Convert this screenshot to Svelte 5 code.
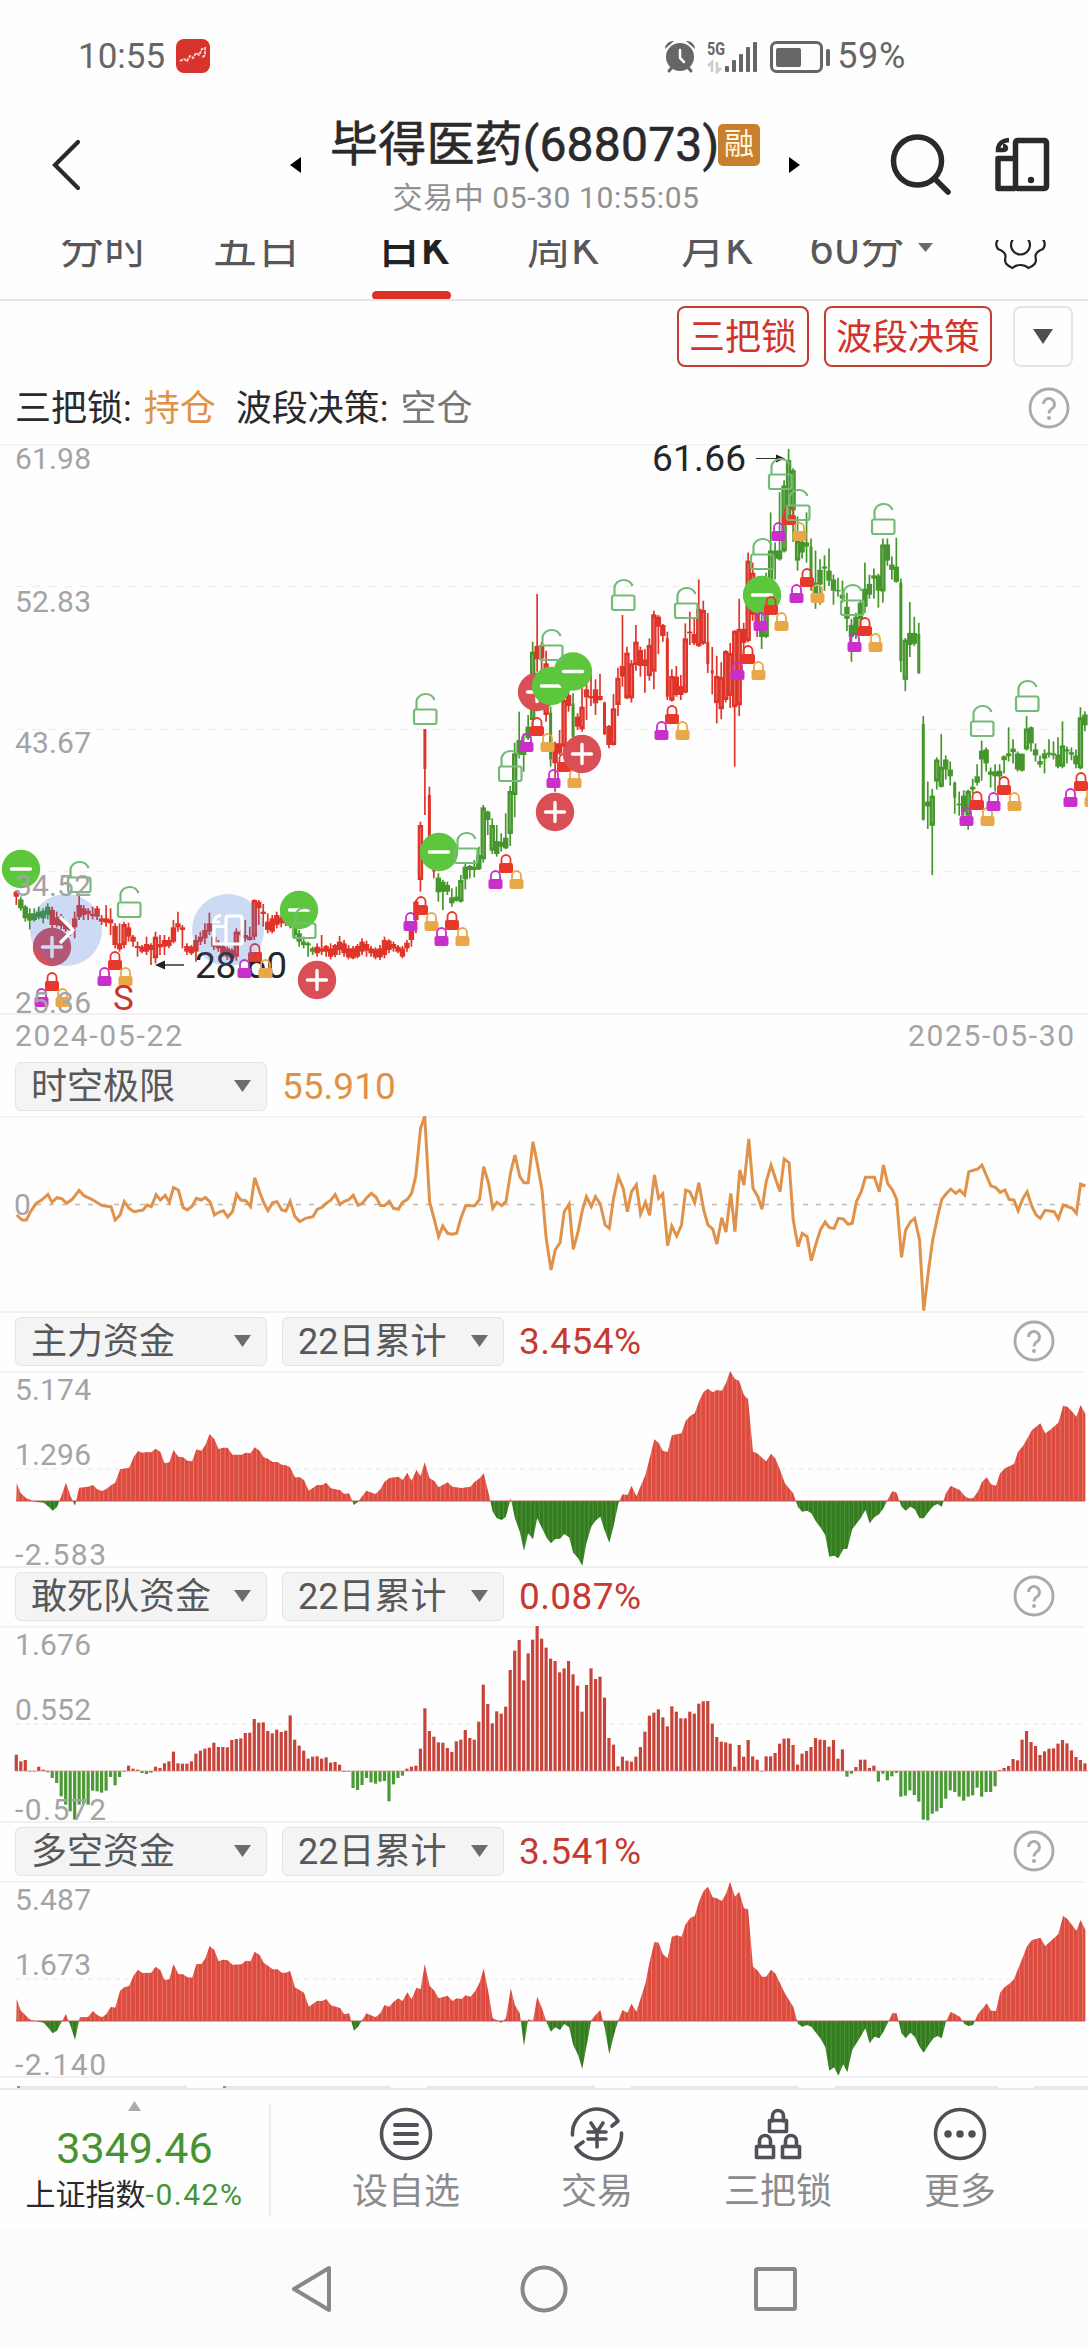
<script lang="ts">
	type Row = [number, number, number, number];
	type Section = { top: number; unit: number; rows: string };

	const START = 16.3;
	const STEP = 4.49;
	const CHART_TOP = 444;

	// high, body top, body bottom, low
	const sections: Section[] = [
		{
			top: 840,
			unit: 3,
			rows: `150,155,170,195 170,178,205,212 195,200,235,245 205,220,242,268 205,220,240,245 200,215,232,238
			205,212,235,250 190,200,225,238 200,210,255,265 215,232,255,262 222,230,258,268 245,252,268,275
			258,262,270,288 215,235,262,295 165,195,232,240 195,205,225,240 205,212,222,240 200,222,228,238
			198,205,230,240 225,235,245,255 195,235,248,260 205,238,250,285 250,258,315,325 250,310,328,335
			245,252,315,325 248,262,290,305 285,290,305,320 305,318,324,350 315,320,335,340 290,312,335,345
			310,315,330,375 275,290,355,370 285,312,322,345 285,300,320,345 290,300,318,325 240,262,305,310
			215,250,262,275 255,262,270,325 310,318,335,345 315,320,340,345 285,300,335,365 275,290,305,315
			250,270,295,312 218,250,275,285 255,290,320,330 300,310,325,335 310,318,340,350 320,325,350,360
			325,330,355,362 265,275,350,362 270,275,285,290 240,285,295,305 260,290,300,302 178,180,290,300
			180,185,205,255 192,215,222,260 220,245,270,280 225,235,275,280 215,225,255,265 225,232,250,262
			238,240,250,258 242,245,258,265 255,260,285,295 270,280,305,320 290,305,315,325 305,310,316,350
			320,325,335,345 310,320,340,350 285,325,335,345 315,318,335,350 310,325,350,358 312,315,345,352
			288,305,330,345 300,310,340,350 315,325,352,358 318,325,355,358 312,318,350,355 295,305,335,345
			302,312,332,350 318,325,340,350 322,328,352,358 315,325,352,360 290,300,345,355 298,302,330,340
			305,312,325,335 315,320,335,340 318,325,350,355 300,308,325,335`
		},
		{
			top: 580,
			unit: 3,
			rows: `1040,1050,1080,1100 960,965,1020,1060 725,735,900,935 447,447,567,705 620,645,810,860 850,860,875,895
			880,893,937,965 900,905,935,990 905,915,935,945 925,952,970,980 920,950,962,965 885,900,965,968
			850,860,898,928 855,858,870,895 840,860,870,892 800,825,868,870 675,682,838,848 692,695,720,765
			715,735,812,822 735,783,822,830 760,785,800,815 700,773,805,808 618,633,762,798 488,520,645,712
			395,480,525,535 460,515,525,575 405,440,475,480 185,215,420,450 42,198,238,275 185,195,235,270
			212,250,405,425 380,398,538,560 485,490,550,635 450,490,520,525 340,360,500,520 330,345,378,395
			340,370,470,475 400,410,440,450 325,380,448,455 300,328,352,420 285,348,355,378 298,328,370,405
			282,348,360,362 365,368,462,465 435,438,495,505 342,385,495,497 263,293,375,408 105,258,290,320
			200,218,355,358 240,250,355,368 135,185,255,272 200,210,258,290 208,238,258,338 175,195,288,302
			92,103,275,328 105,110,140,222 132,135,168,185 155,175,350,360 268,288,362,365 258,290,345,350
			285,318,345,360 130,175,338,340 95,155,160,195 115,162,190,195`
		},
		{
			top: 430,
			unit: 2.489,
			rows: `372,445,538,540 425,448,532,535 455,528,582,605 540,598,606,658 562,612,680,730 578,615,695,720
			548,550,672,678 530,555,662,692 498,500,690,838 420,495,685,712 480,495,530,580 305,325,525,528
			330,355,460,475 440,450,480,515 440,490,515,545 355,380,515,518 205,300,390,400 280,300,320,372
			155,300,322,325 125,138,302,305 47,75,220,235 95,100,200,278 215,275,325,350 270,278,305,320
			205,280,290,330 270,290,370,400 300,380,420,445 322,348,385,435 312,340,345,400 295,350,375,388
			360,372,400,435 368,398,401,415 375,410,420,430 405,440,470,500 470,485,515,577 455,465,510,520
			425,430,470,490 330,395,440,455 360,383,410,420 345,362,370,420 358,362,400,442 270,285,402,430
			270,285,325,338 315,335,348,372 268,340,378,380 370,380,575,603 518,522,622,650 428,505,535,565
			465,505,532,538 480,508,605,607 712,732,970,972 875,925,937,993 893,910,985,1108 815,820,875,895
			757,838,888,890 810,820,845,870 825,845,862,885 875,878,915,955 900,930,934,960 897,910,950,960
			895,898,960,995 868,888,895,905 832,862,878,885 773,798,820,873 790,795,830,850 840,850,858,890
			832,850,862,900 832,848,862,870 810,812,822,855 740,805,812,825 770,793,802,830 800,805,845,850
			805,806,848,850 712,743,795,798 738,740,780,800 780,795,810,825 810,824,833,840 795,805,818,855
			770,803,808,815 775,805,810,820 765,808,838,842 725,785,838,842 788,795,800,830 790,802,808,822
			795,810,832,842 690,715,842,845 700,708,735,750`
		}
	];

	const greenRanges = [
		[1, 7],
		[62, 66],
		[94, 115],
		[119, 119],
		[124, 124],
		[166, 238]
	];

	// bars narrower than their neighbours
	const narrow = [91, 92, 93, 119, 124, 131, 145, 154, 155, 177, 197, 201, 202, 209];

	const candles = sections
		.flatMap(({ top, unit, rows }) =>
			rows
				.trim()
				.split(/\s+/)
				.map((r) => r.split(',').map((v) => top - CHART_TOP + Number(v) / unit) as Row)
		)
		.map(([high, open, close, low], i) => ({
			x: START + STEP * i,
			high,
			open,
			close,
			low,
			w: narrow.includes(i) ? 3 : 5.4,
			color: greenRanges.some(([a, b]) => i >= a && i <= b) ? '#45962c' : '#de3429'
		}));

	const redBadges = [
		[52, 947],
		[317, 980],
		[537, 692],
		[555, 812]
	];
	const greenBadges = [
		[21, 869],
		[299, 910],
		[439, 852],
		[551, 686],
		[573, 671.5],
		[762, 595]
	];
	const openLocks = [
		[79, 859],
		[129, 884],
		[304, 905],
		[425, 691],
		[466, 830],
		[510, 748],
		[551, 627],
		[623, 577],
		[686, 585],
		[780, 456],
		[798, 487],
		[762, 536],
		[852, 582],
		[883, 501],
		[982, 703],
		[1027, 678]
	];
	const lockGroups = [
		[52, 972],
		[115, 951],
		[255, 943],
		[421, 896],
		[452, 911],
		[506, 854],
		[537, 717],
		[564, 753],
		[672, 705],
		[789, 506],
		[807, 568],
		[771, 596],
		[748, 645],
		[865, 617],
		[977, 791],
		[1004, 776],
		[1081, 772]
	];
	const prices = [
		['61.98', 469],
		['52.83', 612],
		['43.67', 753],
		['34.52', 896],
		['25.36', 1013]
	] as const;

	const limitLine =
		'24,525 32,540 38,540 44,515 52,490 60,480 69,463 75,487 82,473 89,476 96,490 104,478 114,451 121,467 134,480 147,497 160,500 166,540 173,525 179,485 186,505 193,515 206,510 212,495 218,500 225,464 231,480 238,466 244,487 250,443 257,450 264,503 270,510 277,498 283,475 290,480 296,472 303,487 309,525 316,516 322,512 328,531 335,515 341,463 347,480 354,482 361,500 367,413 374,455 380,488 386,512 393,488 399,485 406,510 412,513 418,484 425,530 432,545 440,535 451,530 457,508 464,502 470,490 477,480 483,464 490,494 496,484 502,480 509,466 516,496 522,490 529,472 535,460 542,472 548,496 554,497 561,484 567,505 574,508 580,487 587,478 593,460 599,410 606,265 612,228 619,485 626,540 632,590 638,558 645,580 652,583 658,580 664,535 671,497 684,497 691,478 697,380 704,430 710,505 716,487 723,497 729,485 736,395 742,345 749,410 755,428 761,428 768,305 775,380 781,450 787,595 794,690 800,630 807,608 813,515 820,492 826,628 833,575 839,512 845,470 852,500 858,470 865,492 872,555 878,565 884,475 891,410 898,445 904,515 910,455 917,434 923,522 930,487 936,526 943,405 949,475 955,462 962,617 968,558 975,588 982,555 988,450 994,455 1001,488 1007,428 1014,510 1020,555 1027,567 1033,612 1040,533 1046,576 1053,460 1059,575 1066,390 1072,435 1079,297 1085,445 1092,470 1098,508 1104,425 1111,375 1118,420 1124,455 1130,357 1137,368 1143,540 1150,620 1156,580 1163,590 1169,662 1176,610 1182,570 1189,546 1195,563 1202,565 1208,535 1215,537 1222,553 1228,550 1234,485 1241,455 1247,412 1260,412 1267,455 1273,375 1279,430 1286,450 1292,478 1299,652 1305,570 1312,545 1318,535 1325,600 1331,812 1338,690 1344,600 1351,530 1357,478 1364,460 1370,447 1377,460 1383,450 1390,465 1396,395 1409,387 1415,375 1421,405 1428,438 1435,443 1441,457 1448,450 1454,478 1461,480 1467,512 1474,475 1480,455 1487,500 1493,525 1499,535 1506,511 1519,515 1525,537 1532,495 1545,505 1551,520 1557,432 1564,438';

	const mainArea =
		'24,550 30,580 38,595 50,605 63,608 70,620 76,632 82,622 88,590 95,548 102,590 108,617 114,563 121,562 127,560 134,555 140,568 147,573 153,567 160,556 166,548 173,508 186,503 193,470 199,453 205,458 212,456 218,457 224,446 231,455 237,490 244,487 250,450 257,470 264,472 270,482 277,484 283,448 290,452 296,435 302,402 309,418 315,447 321,443 328,443 335,464 348,464 354,458 361,460 367,442 374,452 380,472 386,476 393,486 400,486 406,494 412,496 418,502 425,532 432,532 438,540 445,572 457,555 464,555 470,548 477,565 483,568 490,570 496,582 503,580 510,615 516,605 528,572 541,582 548,568 554,545 561,534 574,530 580,540 587,518 593,542 600,510 606,528 612,487 619,535 626,543 632,562 645,547 652,560 665,564 678,560 684,545 691,535 697,520 704,580 710,635 716,655 723,660 729,650 736,595 742,655 749,695 755,752 761,700 768,718 774,655 781,685 788,715 794,730 800,717 807,716 813,702 820,712 826,758 833,775 839,797 845,730 852,680 858,662 865,650 871,690 878,728 884,680 891,610 897,583 904,585 910,557 917,588 930,525 936,475 943,418 949,428 955,452 962,456 968,406 982,400 988,362 995,347 1001,340 1008,300 1014,275 1020,266 1027,277 1033,270 1040,272 1046,250 1052,213 1059,237 1065,242 1072,285 1078,298 1085,455 1091,460 1098,473 1104,484 1111,461 1117,475 1124,510 1131,550 1143,580 1150,622 1156,635 1163,632 1169,640 1176,665 1182,682 1189,705 1195,770 1202,767 1208,775 1215,748 1221,746 1228,688 1240,655 1247,630 1253,670 1260,652 1267,642 1273,625 1280,595 1286,573 1292,578 1299,620 1305,632 1312,620 1318,628 1325,655 1331,655 1338,635 1345,618 1351,612 1357,620 1363,580 1370,557 1377,565 1383,570 1390,588 1396,595 1402,595 1409,575 1415,545 1422,532 1428,553 1435,557 1441,520 1448,505 1461,492 1467,455 1474,438 1487,390 1499,370 1506,400 1513,390 1525,368 1532,317 1538,320 1545,335 1551,350 1557,315 1564,342';

	const bothArea =
		'24,537 30,572 44,600 63,608 70,625 76,640 82,632 88,608 95,582 102,620 108,660 115,592 127,591 134,573 140,585 147,592 153,583 160,560 166,563 173,512 179,502 186,498 193,465 199,449 205,459 218,458 224,440 231,450 237,480 244,478 250,432 257,462 264,463 270,472 277,473 283,432 290,432 296,415 302,378 309,390 315,424 321,419 328,421 335,434 348,433 354,422 361,424 367,395 374,405 380,428 393,448 400,448 406,458 412,458 418,452 425,502 438,518 445,560 457,542 464,543 470,537 477,556 490,564 496,583 503,580 510,632 516,620 528,580 541,592 548,580 554,555 561,560 567,545 574,535 580,543 587,517 593,538 600,503 606,508 612,432 619,497 626,512 632,535 645,527 652,543 658,535 665,537 671,526 678,530 684,515 691,488 697,445 704,520 710,595 716,600 722,608 729,595 736,505 742,555 749,580 755,678 761,598 768,603 774,530 781,565 788,610 794,635 800,622 807,630 813,612 820,622 826,675 833,705 839,747 845,680 852,600 858,585 865,570 871,620 878,702 884,650 891,600 897,570 904,578 910,551 917,575 930,490 936,425 943,366 949,368 955,402 962,415 968,350 975,346 982,350 988,312 995,293 1001,288 1008,240 1014,212 1020,200 1027,232 1033,235 1040,243 1046,222 1052,185 1059,230 1065,215 1072,265 1078,268 1085,440 1091,450 1098,470 1104,470 1111,449 1117,460 1124,490 1131,520 1143,560 1150,612 1156,620 1163,615 1169,620 1182,655 1189,680 1195,752 1202,742 1208,767 1215,733 1221,757 1228,690 1240,650 1247,625 1253,670 1260,650 1267,655 1273,635 1280,605 1286,579 1292,580 1299,640 1305,655 1312,638 1318,650 1325,680 1331,698 1338,675 1345,655 1351,648 1357,655 1363,605 1370,575 1383,590 1390,613 1396,618 1402,615 1409,583 1422,550 1428,572 1435,573 1441,518 1448,500 1454,492 1461,478 1474,410 1480,378 1487,360 1499,353 1506,378 1513,365 1525,342 1532,287 1538,297 1551,332 1557,300 1564,330';

	const teamBars = [
		585, 605, 601, 634, 635, 621, 630, 638, 655, 670, 710, 735, 755, 780, 735, 733, 735, 693, 695,
		699, 693, 652, 677, 652, 636, 618, 627, 630, 640, 643, 639, 621, 625, 611, 605, 576, 611, 612,
		612, 605, 582, 573, 567, 564, 549, 562, 562, 563, 541, 538, 536, 520, 519, 478, 489, 488, 514,
		521, 510, 517, 513, 467, 540, 558, 573, 597, 591, 590, 597, 593, 609, 607, 615, 637, 634, 685,
		691, 676, 655, 668, 672, 666, 664, 725, 674, 655, 648, 627, 621, 618, 567, 446, 514, 531, 548,
		549, 565, 577, 545, 540, 511, 535, 540, 486, 375, 433, 491, 455, 462, 441, 331, 273, 241, 362,
		281, 240, 198, 237, 264, 297, 304, 338, 326, 304, 344, 378, 456, 376, 326, 358, 351, 414, 535,
		555, 620, 591, 603, 606, 591, 562, 516, 468, 459, 449, 473, 500, 440, 456, 476, 476, 456, 462,
		432, 425, 424, 492, 532, 546, 548, 552, 621, 556, 591, 541, 590, 600, 634, 590, 590, 580, 552,
		537, 536, 556, 615, 582, 574, 562, 535, 540, 541, 561, 541, 597, 569, 651, 642, 622, 600, 600,
		625, 618, 666, 642, 662, 650, 640, 711, 708, 692, 706, 726, 780, 782, 762, 755, 745, 717, 692,
		697, 711, 723, 711, 707, 684, 711, 697, 697, 680, 631, 625, 619, 598, 602, 540, 514, 547, 559,
		586, 575, 567, 566, 552, 541, 551, 572, 592, 601, 611
	].map((v) => (v - 634) / 3);

	const funds = [
		{
			id: 'main',
			name: '主力资金',
			value: '3.454%',
			labels: ['5.174', '1.296', '-2.583'],
			zero: 130,
			points: scale(mainArea, 213, 130)
		},
		{
			id: 'team',
			name: '敢死队资金',
			value: '0.087%',
			labels: ['1.676', '0.552', '-0.572'],
			zero: 145,
			points: ''
		},
		{
			id: 'both',
			name: '多空资金',
			value: '3.541%',
			labels: ['5.487', '1.673', '-2.140'],
			zero: 140,
			points: scale(bothArea, 183, 140)
		}
	];

	const tabs = ['分时', '五日', '日K', '周K', '月K', '60分'];

	// closes the curve along the zero line
	function scale(area: string, base: number, zero: number) {
		const curve = area
			.split(' ')
			.map((p) => p.split(',').map(Number))
			.map(([x, y]) => `${(x * 0.694).toFixed(1)},${((y - base) / 3).toFixed(1)}`)
			.join(' ');
		return `16.3,${zero} ${curve} 1085.4,${zero}`;
	}
</script>

{#snippet help()}
	<svg class="help" width="42" height="42" viewBox="0 0 42 42">
		<circle cx="21" cy="21" r="19" />
		<path d="M15.5 17a5.5 5.5 0 1 1 8.5 4.6c-2.2 1.5-3 2.4-3 5" />
		<circle class="dot" cx="21" cy="31" r="2" />
	</svg>
{/snippet}

{#snippet lock(x: number, y: number, color: string)}
	<g transform="translate({x} {y})">
		<path d="M-4.5 10V5.5a4.5 4.5 0 0 1 9 0V10" fill="none" stroke={color} stroke-width="1.8" />
		<rect x="-7" y="9" width="14" height="10" rx="2" fill={color} />
	</g>
{/snippet}

{#snippet badge(x: number, y: number, plus: boolean)}
	<circle cx={x} cy={y} r="19.2" fill={plus ? '#da4f55' : '#5cc63c'} />
	<path
		d="M{x - 9.5} {y}h19{plus ? `M${x} ${y - 9.5}v19` : ''}"
		stroke="#fff"
		stroke-width="3.4"
		stroke-linecap="round"
	/>
{/snippet}

{#snippet select(text: string, kind: string)}
	<div class="select {kind}">
		<span>{text}</span>
		<i class="caret"></i>
	</div>
{/snippet}

<div class="screen">
	<div class="status">
		<span>10:55</span>
		<svg class="app" width="34" height="34" viewBox="0 0 34 34">
			<rect width="34" height="34" rx="8" fill="#d6342c" />
			<path
				d="M4 22l4-2 3 2 3-5 3 2 3-5 3 2 3-6 3-1v7l-3 3"
				fill="none"
				stroke="#ffd9d2"
				stroke-width="1.8"
				stroke-dasharray="3 1"
			/>
		</svg>
		<svg class="signals" width="170" height="36" viewBox="0 0 170 36">
			<g fill="#666">
				<circle cx="16" cy="19" r="14" />
				<path d="M1 11a8 8 0 0 1 9-8zM31 11a8 8 0 0 0-9-8z" />
				<path d="M5 33l5-6M27 33l-5-6" stroke="#666" stroke-width="3" stroke-linecap="round" />
				<path d="M16 12v8l4 4" fill="none" stroke="#fff" stroke-width="2.5" stroke-linecap="round" />
				<text x="43" y="17" font-size="18" font-weight="700" textLength="18" lengthAdjust="spacingAndGlyphs">5G</text>
				<rect x="61" y="28" width="4" height="6" rx="1" />
				<rect x="68" y="22" width="4" height="12" rx="1" />
				<rect x="75" y="16" width="4" height="18" rx="1" />
				<rect x="82" y="9" width="4" height="25" rx="1" />
				<rect x="89" y="4" width="4" height="30" rx="1" />
				<rect x="112" y="10" width="25" height="19" rx="2" />
				<rect x="162" y="11" width="4" height="17" rx="1.5" />
			</g>
			<path d="M44 28l4-4v10M53 24v10l4-4" fill="none" stroke="#ccc" stroke-width="2.5" />
			<rect x="107.5" y="4.5" width="50" height="29" rx="5" fill="none" stroke="#666" stroke-width="3" />
		</svg>
		<span>59%</span>
	</div>

	<header>
		<svg class="back" width="32" height="54" viewBox="0 0 32 54">
			<path d="M27 4L4 27l23 23" fill="none" stroke="#2b2b2d" stroke-width="4.2" stroke-linecap="round" />
		</svg>
		<svg class="prev" width="13" height="18" viewBox="0 0 13 18"><path d="M12 1v16L1 9z" /></svg>
		<div class="title">
			<h1><span>毕得医药(688073)</span><em>融</em></h1>
			<p>交易中 05-30 10:55:05</p>
		</div>
		<svg class="next" width="13" height="18" viewBox="0 0 13 18"><path d="M1 1v16l11-8z" /></svg>
		<svg class="search" width="62" height="62" viewBox="0 0 62 62">
			<g fill="none" stroke="#2a2a2c" stroke-width="5.5" stroke-linecap="round">
				<circle cx="27.5" cy="28" r="24" />
				<path d="M45 46l13 13" />
			</g>
		</svg>
		<svg class="phone" width="56" height="56" viewBox="0 0 56 56">
			<g fill="none" stroke="#2a2a2c" stroke-width="5.5" stroke-linejoin="round">
				<rect x="20.5" y="3.5" width="31" height="48" rx="2" />
				<path d="M20.5 21.5H3v30h17.5" />
			</g>
			<path d="M14 3C6 3.5 3 8 3 13h6c3 0 2.5-4-1-4" fill="none" stroke="#2a2a2c" stroke-width="4.5" />
			<circle cx="36" cy="43" r="3.2" fill="#2a2a2c" />
		</svg>
	</header>

	<nav class="tabs">
		{#each tabs as tab, i}
			<span class="tab t{i}" class:active={i === 2}>{tab}</span>
		{/each}
		<i class="caret small"></i>
		<svg class="gear" width="54" height="30" viewBox="994 240 54 30">
			<g fill="none" stroke="#222" stroke-width="2.2">
				<circle cx="1020.5" cy="245" r="9.5" />
				<path
					d="M999 238Q994 244 998 249Q1006 252 1005.5 257Q1004.5 261 1006 263.5Q1009 267 1012.5 268Q1016 265 1020.5 265Q1025 265 1028.5 268Q1032 267 1035 263.500Q1036.5 261 1035.5 257Q1035 252 1043 249Q1047 244 1042 238"
				/>
			</g>
		</svg>
	</nav>

	<div class="tools">
		<button>三把锁</button>
		<button>波段决策</button>
		<button class="more"><i class="caret dark"></i></button>
	</div>

	<div class="legend">
		<span>三把锁:</span>
		<span class="hold">持仓</span>
		<span>波段决策:</span>
		<span class="empty">空仓</span>
		{@render help()}
	</div>

	<svg class="kline" width="1088" height="618" viewBox="0 0 1088 618">
		<g class="grid">
			<path d="M0 .5H1088M0 570H1088" />
			<path class="dash" d="M16 142.5H1082M16 285.5H1082M16 427.5H1082" />
		</g>

		{#each candles as c}
			<path d="M{c.x} {c.high}V{c.low}" stroke={c.color} stroke-width="1.7" />
			<rect
				x={c.x - c.w / 2}
				y={c.open}
				width={c.w}
				height={Math.max(1.5, c.close - c.open)}
				fill={c.color}
			/>
			{#if c.w > 5 && c.close - c.open > 20}
				<path d="M{c.x} {c.open + 3}V{c.close - 3}" stroke="#fff" stroke-width=".9" opacity=".35" />
			{/if}
		{/each}

		<text class="extreme" x="652" y="27" textLength="94">61.66</text>
		<path d="M756 14.5H777" stroke="#333" />
		<path d="M776 10.5v8l9-4z" fill="#222" />
		<text class="extreme" x="195" y="534" textLength="92">28.60</text>
		<path d="M163 521H184" stroke="#333" stroke-width="1.5" />
		<path d="M165 516.5v9l-10-4.5z" fill="#222" />

		<g transform="translate(0 {-CHART_TOP})">
			{#each redBadges as [x, y]}
				{@render badge(x, y, true)}
			{/each}
			{#each greenBadges as [x, y]}
				{@render badge(x, y, false)}
			{/each}
			{#each lockGroups as [x, y]}
				{@render lock(x, y, '#e8382b')}
				{@render lock(x - 10.5, y + 16, '#c92fca')}
				{@render lock(x + 10.5, y + 16, '#e8a848')}
			{/each}
			{#each openLocks as [x, y]}
				<g transform="translate({x} {y})" fill="none" stroke="#74bb78" stroke-width="2.2">
					<path d="M-8.5 18V10a9.5 9.5 0 0 1 18-1" />
					<rect x="-11" y="18.5" width="22.5" height="14.5" rx="2" />
				</g>
			{/each}
			{@render badge(582, 754, true)}

			<g fill="#3d74d8" opacity=".25">
				<circle cx="66" cy="930" r="36" />
				<circle cx="228" cy="930" r="36" />
			</g>
			<g fill="none" stroke="#fff" stroke-width="3.2">
				<path d="M60 917l13 13-13 13" />
				<rect x="226" y="916" width="16" height="28" rx="2" />
				<path d="M226 926.5H214V944h12M221 915.5c-4 0-7 3-7 6.5h6" />
			</g>

			{#each prices as [label, y]}
				<text class="axis" x="15" {y} textLength="76">{label}</text>
			{/each}
			<text x="113" y="1010" font-size="35" fill="#c9362c">S</text>
			<text class="axis" x="15" y="1046" textLength="167">2024-05-22</text>
			<text class="axis" x="908" y="1046" textLength="166">2025-05-30</text>
		</g>
	</svg>

	<section class="panel">
		<div class="bar first">
			{@render select('时空极限', 'wide')}
			<strong class="orange">55.910</strong>
		</div>
		<svg width="1088" height="195" viewBox="0 0 1088 195">
			<g class="grid"><path d="M0 .5H1085" /></g>
			<path d="M36 88.5H1088" stroke="#bbb" stroke-width="1.3" stroke-dasharray="5 8" />
			<text class="axis" x="14" y="99">0</text>
			<g transform="scale(.694 .33333) translate(0 -228)">
				<polyline
					points={limitLine}
					fill="none"
					stroke="#e0924a"
					stroke-width="3"
					vector-effect="non-scaling-stroke"
				/>
			</g>
		</svg>
	</section>

	{#each funds as fund}
		<section class="panel">
			<div class="bar">
				{@render select(fund.name, 'wide')}
				{@render select('22日累计', 'period')}
				<strong>{fund.value}</strong>
				{@render help()}
			</div>
			<svg width="1088" height="195" viewBox="0 0 1088 195">
				<g class="grid">
					<path d="M0 .5H1085" />
					<path class="dash fine" d="M16 98H1082" />
				</g>
				{#if fund.points}
					<defs>
						<clipPath id="{fund.id}-up"><rect width="1088" height={fund.zero} /></clipPath>
						<clipPath id="{fund.id}-down"><rect y={fund.zero} width="1088" height="70" /></clipPath>
						<pattern id="{fund.id}-red" width="4.49" height="10" patternUnits="userSpaceOnUse">
							<rect width="5" height="10" fill="#dd4a3e" />
							<rect width="1" height="10" fill="#e87468" />
						</pattern>
						<pattern id="{fund.id}-green" width="4.49" height="10" patternUnits="userSpaceOnUse">
							<rect width="5" height="10" fill="#357c20" />
							<rect width="1" height="10" fill="#4d963a" />
						</pattern>
					</defs>
					<g clip-path="url(#{fund.id}-up)">
						<polygon points={fund.points} fill="url(#{fund.id}-red)" />
					</g>
					<g clip-path="url(#{fund.id}-down)">
						<polygon points={fund.points} fill="url(#{fund.id}-green)" />
					</g>
					<path d="M16 {fund.zero}H1085" stroke="#b9584c" />
				{:else}
					{#each teamBars as v, i}
						<rect
							x={START + STEP * i - 1.6}
							y={fund.zero + Math.min(v, 0)}
							width="3.2"
							height={Math.max(0.6, Math.abs(v))}
							fill={v > 0 ? '#4c9a35' : '#c8443b'}
						/>
					{/each}
					<path d="M16 {fund.zero}H1088" stroke="#d98a80" stroke-width=".8" />
				{/if}
				<text class="axis" x="15" y="29" textLength="76">{fund.labels[0]}</text>
				<text class="axis" x="15" y="94" textLength="76">{fund.labels[1]}</text>
				<text class="axis" x="15" y="194" textLength="91">{fund.labels[2]}</text>
			</svg>
		</section>
	{/each}

	<div class="peek">
		{#each [170, 169, 168, 168, 164, 54] as w}
			<i style:width="{w}px"></i>
		{/each}
	</div>

	<footer>
		<div class="index">
			<i class="up"></i>
			<b>3349.46</b>
			<p>上证指数<span>-0.42%</span></p>
		</div>
		<div class="action a0">
			<svg width="54" height="54" viewBox="-27 -27 54 54">
				<circle r="24.5" />
				<path d="M-11-9H11M-11 0H11M-11 9H11" stroke-width="4" />
			</svg>
			<span>设自选</span>
		</div>
		<div class="action a1">
			<svg width="54" height="54" viewBox="-27 -27 54 54">
				<path d="M-24.5 1A24.5 24.5 0 0 1 21-13L15-8M24.5-1A24.5 24.5 0 0 1-21 13L-14 8" />
				<path d="M-6-11L0-2L6-11M0-2V13M-9-2H9M-9 5H9" />
			</svg>
			<span>交易</span>
		</div>
		<div class="action a2">
			<svg width="54" height="54" viewBox="-27 -27 54 54">
				<path d="M-5.5-13v-5a5.5 5.5 0 0 1 11 0v5M-18.5 12v-5a5.5 5.5 0 0 1 11 0v5M7.5 12v-5a5.5 5.5 0 0 1 11 0v5" />
				<path d="M-8.5-13.5h17v11h-17zM-21.5 12.500h17v11h-17zM4.5 12.500h17v11h-17z" />
			</svg>
			<span>三把锁</span>
		</div>
		<div class="action a3">
			<svg width="54" height="54" viewBox="-27 -27 54 54">
				<circle r="24.5" />
				<path d="M-12 0h.01M0 0h.01M12 0h.01" stroke-width="7.5" />
			</svg>
			<span>更多</span>
		</div>
	</footer>

	<div class="system">
		<svg width="46" height="50" viewBox="0 0 46 50"><path d="M40 4v42L5 25z" /></svg>
		<svg width="50" height="50" viewBox="0 0 50 50"><circle cx="25" cy="25" r="21.5" /></svg>
		<svg width="46" height="50" viewBox="0 0 46 50"><rect x="3" y="5" width="39" height="40" rx="1.5" /></svg>
	</div>
</div>

<style>
	:global(body) {
		margin: 0;
		background: #fefefe;
	}

	.screen {
		width: 1088px;
		height: 2348px;
		overflow: hidden;
		display: flex;
		flex-direction: column;
		background: #fefefe;
		color: #2a2a2c;
		font-family: Roboto, 'Noto Sans CJK SC', sans-serif;
		font-size: 36px;
		line-height: 1;
	}

	.screen > * {
		flex-shrink: 0;
	}

	.screen * {
		box-sizing: border-box;
	}

	svg {
		display: block;
	}

	.status {
		height: 112px;
		display: flex;
		align-items: center;
		padding-left: 78px;
		color: #666;
		font-size: 35px;
	}

	.app {
		margin-left: 11px;
	}

	.signals {
		margin: 0 0 0 454px;
	}

	.status span:last-child {
		margin-left: 3px;
		font-size: 36px;
		letter-spacing: 0.7px;
	}

	header {
		height: 128px;
		display: flex;
		align-items: flex-start;
	}

	.back {
		margin: 26px 0 0 51px;
	}

	.prev {
		margin: 44px 0 0 206px;
	}

	.title {
		width: 432px;
		margin: 6px 0 0 28px;
		text-align: center;
	}

	h1 {
		display: flex;
		align-items: center;
		margin: 0;
		height: 54px;
		font-size: 48px;
		font-weight: 400;
		white-space: nowrap;
		-webkit-text-stroke: 0.6px #2a2a2c;
	}

	h1 span {
		width: 388px;
		letter-spacing: 0.2px;
	}

	h1 em {
		flex: none;
		width: 42px;
		height: 42px;
		border-radius: 5px;
		background: #c8802f;
		color: #fff6dc;
		font-size: 30px;
		font-style: normal;
		line-height: 40px;
		-webkit-text-stroke: 0;
	}

	.title p {
		margin: 11px 0 0;
		font-size: 30px;
		color: #909092;
		letter-spacing: 0.6px;
	}

	.next {
		margin: 44px 0 0 26px;
	}

	.search {
		margin: 21px 0 0 89px;
	}

	.phone {
		margin: 25px 0 0 43px;
	}

	.tabs {
		height: 61px;
		overflow: hidden;
		display: flex;
		border-bottom: 2px solid #e6e6e6;
		color: #58585a;
		font-size: 44px;
	}

	.tab {
		position: relative;
		display: flex;
		height: 73px;
		margin-top: -13px;
		line-height: 44px;
		white-space: nowrap;
	}

	.t0 {
		margin-left: 60px;
		width: 153px;
	}

	.t1 {
		width: 159px;
	}

	.t2 {
		width: 79px;
		padding-left: 5px;
	}

	.t3 {
		margin-left: 76px;
		width: 154px;
	}

	.t4 {
		width: 128px;
	}

	.t5 {
		width: 107px;
		letter-spacing: 1px;
	}

	.active {
		color: #222;
		font-weight: 500;
	}

	.active::after {
		content: '';
		position: absolute;
		left: 0;
		bottom: 0;
		width: 79px;
		height: 9px;
		border-radius: 5px;
		background: #dd3026;
	}

	.caret {
		width: 17px;
		height: 12px;
		background: #6c6c6c;
		clip-path: polygon(0 0, 100% 0, 50% 100%);
	}

	.caret.small {
		width: 15px;
		height: 9px;
		margin: 3px 0 0 2px;
	}

	.caret.dark {
		width: 20px;
		height: 15px;
		background: #4c4d55;
	}

	.gear {
		margin-left: 61px;
	}

	.tools {
		height: 71px;
		display: flex;
		justify-content: flex-end;
		align-items: flex-start;
		gap: 15px;
		padding: 5px 15px 0 0;
	}

	button {
		width: 132px;
		height: 61px;
		padding: 2px 0 0;
		border: 2px solid #c43d35;
		border-radius: 8px;
		background: none;
		color: #d0342b;
		font: inherit;
	}

	button:nth-child(2) {
		width: 168px;
	}

	button.more {
		width: 60px;
		margin-left: 6px;
		padding: 0;
		border-color: #e5e5e5;
		display: flex;
		align-items: center;
		justify-content: center;
	}

	.legend {
		height: 72px;
		display: flex;
		align-items: center;
		padding: 0 18px 0 15px;
		white-space: nowrap;
	}

	.legend span {
		margin-right: 12px;
		margin-top: 1px;
	}

	.legend .hold {
		color: #df9146;
		margin-right: 20px;
	}

	.legend .empty {
		color: #777;
	}

	.help {
		margin-left: auto;
		fill: none;
		stroke: #aaa;
		stroke-width: 2.8;
	}

	.help .dot {
		fill: #aaa;
		stroke: none;
	}

	.grid {
		fill: none;
		stroke: #f0f0f0;
		stroke-width: 2;
	}

	.dash {
		stroke-dasharray: 8 8;
		stroke-width: 1.6;
	}

	.fine {
		stroke-dasharray: 5 4;
	}

	.axis {
		font-size: 30px;
		fill: #a4a4a4;
	}

	.extreme {
		font-size: 37px;
		fill: #262626;
	}

	.bar {
		height: 60px;
		display: flex;
		align-items: center;
		padding: 0 33px 2px 15px;
		border-top: 2px solid #f0f0f0;
	}

	.bar.first {
		height: 54px;
		padding-bottom: 6px;
		border-top: 0;
	}

	.select {
		display: flex;
		align-items: center;
		justify-content: space-between;
		height: 49px;
		padding: 0 15px;
		border: 1px solid #e4e4e4;
		border-radius: 6px;
		background: #f4f4f4;
		color: #58585a;
		white-space: nowrap;
	}

	.select span {
		margin-top: 2px;
	}

	.wide {
		width: 252px;
	}

	.period {
		width: 222px;
		margin-left: 15px;
	}

	strong {
		margin-left: 15px;
		font-size: 37px;
		font-weight: 400;
		color: #c63a32;
		letter-spacing: 0.4px;
	}

	.orange {
		color: #df9146;
		letter-spacing: 0;
	}

	.peek {
		height: 12px;
		border-top: 2px solid #f0f0f0;
		display: flex;
		align-items: flex-end;
		gap: 36px;
		padding-left: 17px;
	}

	.peek i {
		height: 2px;
		background: #e8e8e8;
	}

	.peek i:nth-child(-n + 2) {
		border-left: 3px solid #7f95b3;
	}

	footer {
		height: 142px;
		display: flex;
		border-top: 2px solid #e8e8e8;
	}

	.index {
		width: 271px;
		height: 112px;
		margin-top: 14px;
		border-right: 2px solid #ececec;
		display: flex;
		flex-direction: column;
		align-items: center;
		color: #459331;
	}

	.up {
		width: 13px;
		height: 10px;
		margin-top: -3px;
		background: #aaa;
		clip-path: polygon(50% 0, 100% 100%, 0 100%);
	}

	.index b {
		margin-top: 16px;
		font-size: 43px;
		font-weight: 400;
	}

	.index p {
		margin: 10px 0 0;
		font-size: 30px;
		color: #2a2a2c;
		white-space: nowrap;
	}

	.index p span {
		color: #459331;
		letter-spacing: 1.5px;
	}

	.action {
		width: 160px;
		display: flex;
		flex-direction: column;
		align-items: center;
		color: #8c8c8e;
		padding-top: 17px;
	}

	.action svg {
		fill: none;
		stroke: #505158;
		stroke-width: 3.6;
		stroke-linecap: round;
		stroke-linejoin: round;
	}

	.action span {
		margin-top: 13px;
	}

	.a0 {
		margin-left: 55px;
	}

	.a1 {
		margin-left: 31px;
	}

	.a2 {
		margin-left: 21px;
	}

	.a3 {
		margin-left: 22px;
	}

	.system {
		height: 118px;
		display: flex;
		justify-content: center;
		align-items: center;
		gap: 184px;
		background: #fbfbfb;
	}

	.system svg {
		fill: none;
		stroke: #888;
		stroke-width: 4;
		stroke-linejoin: round;
	}
</style>
